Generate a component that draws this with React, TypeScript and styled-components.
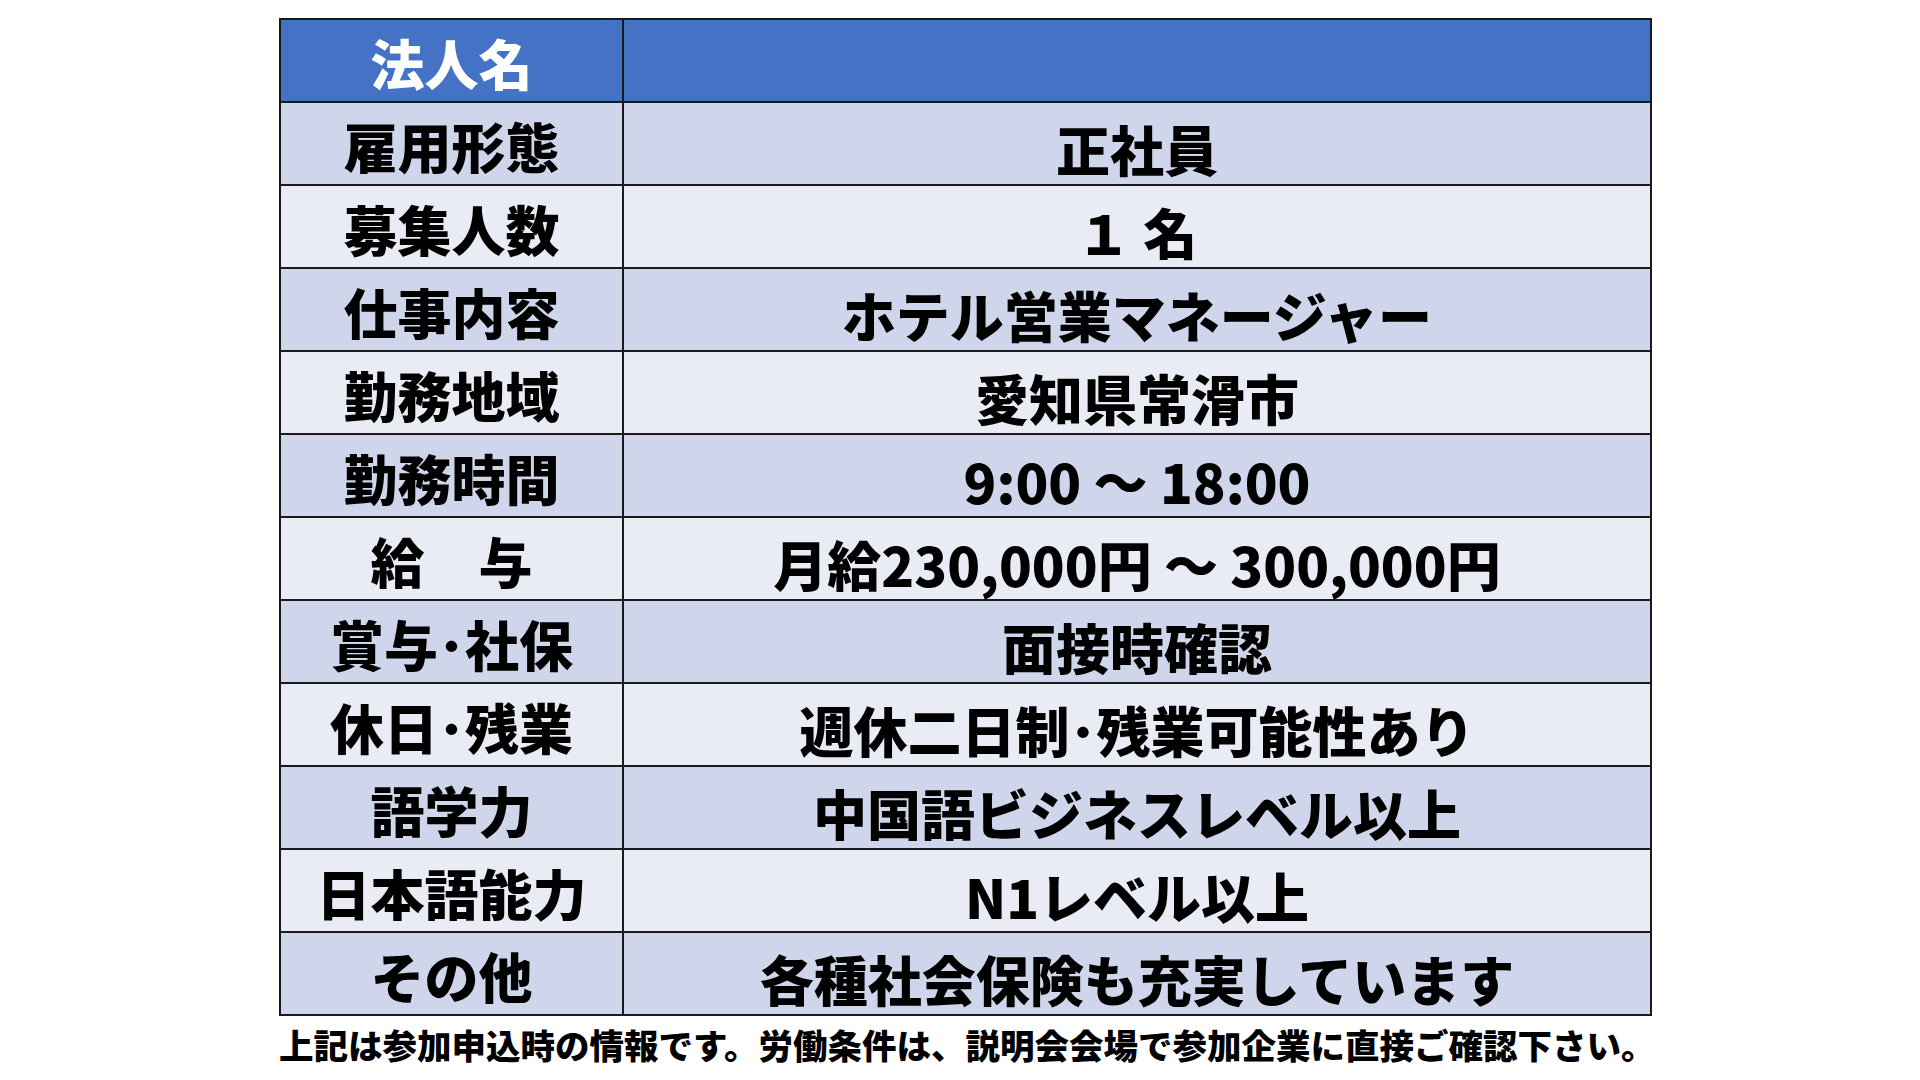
import styled, { createGlobalStyle } from "styled-components";

const GlobalStyle = createGlobalStyle`
  html, body {
    margin: 0;
    padding: 0;
    background: #ffffff;
  }
  body {
    font-family: "Noto Sans CJK JP", "Noto Sans", sans-serif;
  }
`;

const Page = styled.div`
  width: 1920px;
  height: 1080px;
  box-sizing: border-box;
  padding: 18px 0 0 279px;
  overflow: hidden;
`;

const Table = styled.table`
  width: 1373px;
  border-collapse: collapse;
  table-layout: fixed;
  border: 2px solid #1a1a1a;
`;

const Tr = styled.tr<{ $tone: "head" | "dark" | "light" }>`
  height: 83px;
  background-color: ${(p) =>
    p.$tone === "head" ? "#4472c4" : p.$tone === "dark" ? "#cfd5ea" : "#e9ebf5"};
`;

const Label = styled.th<{ $head?: boolean }>`
  width: 343px;
  box-sizing: border-box;
  border: 2px solid #1a1a1a;
  padding: 4px 0 0;
  font-size: 54px;
  font-weight: 900;
  line-height: 1;
  text-align: center;
  white-space: nowrap;
  color: ${(p) => (p.$head ? "#ffffff" : "#000000")};
`;

const Value = styled.td`
  border: 2px solid #1a1a1a;
  padding: 10px 0 0;
  font-size: 54px;
  font-weight: 900;
  line-height: 1;
  text-align: center;
  white-space: nowrap;
  color: #000000;
`;

const Note = styled.p`
  margin: 8px 0 0;
  font-size: 34.5px;
  font-weight: 900;
  line-height: 1.2;
  color: #000000;
  white-space: nowrap;
`;

const rows: [string, string][] = [
  ["雇用形態", "正社員"],
  ["募集人数", "１ 名"],
  ["仕事内容", "ホテル営業マネージャー"],
  ["勤務地域", "愛知県常滑市"],
  ["勤務時間", "9:00 ～ 18:00"],
  ["給　与", "月給230,000円 ～ 300,000円"],
  ["賞与･社保", "面接時確認"],
  ["休日･残業", "週休二日制･残業可能性あり"],
  ["語学力", "中国語ビジネスレベル以上"],
  ["日本語能力", "N1レベル以上"],
  ["その他", "各種社会保険も充実しています"],
];

export default function App() {
  return (
    <>
      <GlobalStyle />
      <Page>
        <Table>
          <tbody>
            <Tr $tone="head">
              <Label $head>法人名</Label>
              <Value></Value>
            </Tr>
            {rows.map(([label, value], i) => (
              <Tr key={label} $tone={i % 2 === 0 ? "dark" : "light"}>
                <Label>{label}</Label>
                <Value>{value}</Value>
              </Tr>
            ))}
          </tbody>
        </Table>
        <Note>
          上記は参加申込時の情報です。労働条件は、説明会会場で参加企業に直接ご確認下さい。
        </Note>
      </Page>
    </>
  );
}
